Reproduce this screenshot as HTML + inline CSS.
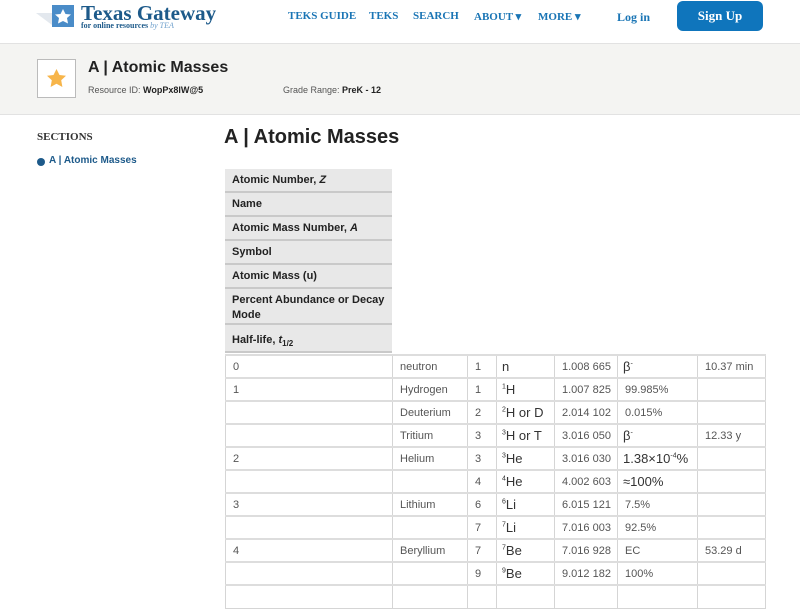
<!DOCTYPE html>
<html><head><meta charset="utf-8"><style>
*{margin:0;padding:0;box-sizing:border-box}
body{width:800px;height:588px;overflow:hidden;background:#fff;font-family:"Liberation Sans",sans-serif;position:relative;color:#222}
.a{position:absolute}
.nav{font-family:"Liberation Serif",serif;font-weight:bold;color:#1a75b5;font-size:11px;top:10px}
.hd{left:225px;width:167px;background:#e8e8e8;border-bottom:2px solid #c9c9c9;font-size:11px;font-weight:bold;padding:5px 7px;color:#222;white-space:nowrap}
table{position:absolute;left:225px;top:354px;border-collapse:collapse;table-layout:fixed;width:540px;font-size:11px;color:#555}
td{height:23px;border:1px solid #d5d5d5;border-top:2px solid #ddd;padding:0 7px;white-space:nowrap}
td.s{font-size:13px;color:#333;padding:0 5px}
sup{font-size:7px}
</style></head><body>
<svg class="a" style="left:36px;top:3px" width="40" height="26"><polygon points="0,10 16,10 16,22" fill="#e3e8ee"/><rect x="16" y="2" width="22" height="22" fill="#4a8cc8"/><polygon points="27,6 29.5,11 35,11.5 31,15 32,20.5 27,18 22,20.5 23,15 19,11.5 24.5,11" fill="#fff"/></svg>
<div class="a" style="left:81px;top:1px;font-family:'Liberation Serif',serif;font-weight:bold;font-size:21px;color:#1d5a8a">Texas Gateway</div>
<div class="a" style="left:81px;top:21px;font-family:'Liberation Serif',serif;font-weight:bold;font-size:8px;color:#1d5a8a">for online resources <i style="color:#6fa0cc;font-weight:normal">by TEA</i></div>
<div class="a nav" style="left:288px">TEKS GUIDE</div>
<div class="a nav" style="left:369px">TEKS</div>
<div class="a nav" style="left:413px">SEARCH</div>
<div class="a nav" style="left:474px">ABOUT ▾</div>
<div class="a nav" style="left:538px">MORE ▾</div>
<div class="a nav" style="left:617px;font-size:12px">Log in</div>
<div class="a" style="left:677px;top:1px;width:86px;height:30px;background:#0f75bc;border-radius:6px;color:#fff;font-family:'Liberation Serif',serif;font-weight:bold;font-size:13px;text-align:center;line-height:30px">Sign Up</div>
<div class="a" style="left:0;top:43px;width:800px;height:72px;background:#f4f4f2;border-top:1px solid #e2e2e2;border-bottom:1px solid #e2e2e2"></div>
<div class="a" style="left:37px;top:59px;width:39px;height:39px;background:#fff;border:1px solid #bbb"></div>
<svg class="a" style="left:46px;top:68px" width="21" height="20"><polygon points="10.5,1 13.5,7 20,7.8 15.2,12.3 16.4,19 10.5,15.7 4.6,19 5.8,12.3 1,7.8 7.5,7" fill="#f7b54a"/></svg>
<div class="a" style="left:88px;top:59px;font-size:16px;font-weight:bold;color:#222">A | Atomic Masses</div>
<div class="a" style="left:88px;top:85px;font-size:9px;color:#555">Resource ID: <b style="color:#222">WopPx8lW@5</b></div>
<div class="a" style="left:283px;top:85px;font-size:9px;color:#555">Grade Range: <b style="color:#222">PreK - 12</b></div>
<div class="a" style="left:37px;top:131px;font-family:'Liberation Serif',serif;font-weight:bold;font-size:11px;color:#333">SECTIONS</div>
<div class="a" style="left:37px;top:158px;width:8px;height:8px;border-radius:50%;background:#1d5a8a"></div>
<div class="a" style="left:49px;top:155px;font-size:10px;font-weight:bold;color:#1d5a8a">A | Atomic Masses</div>
<div class="a" style="left:224px;top:126px;font-size:20px;font-weight:bold;color:#222">A | Atomic Masses</div>
<div class="a hd" style="top:169px;height:24px">Atomic Number, <i>Z</i></div>
<div class="a hd" style="top:193px;height:24px">Name</div>
<div class="a hd" style="top:217px;height:24px">Atomic Mass Number, <i>A</i></div>
<div class="a hd" style="top:241px;height:24px">Symbol</div>
<div class="a hd" style="top:265px;height:24px">Atomic Mass (u)</div>
<div class="a hd" style="top:289px;height:36px;line-height:15px;padding-top:4px">Percent Abundance or Decay<br>Mode</div>
<div class="a hd" style="top:325px;height:28px;padding-top:9px">Half-life, <i>t</i><sub style="font-size:8px">1/2</sub></div>
<table>
<colgroup><col style="width:167px"><col style="width:75px"><col style="width:29px"><col style="width:58px"><col style="width:63px"><col style="width:80px"><col style="width:68px"></colgroup>
<tr><td>0</td><td>neutron</td><td>1</td><td class="s">n</td><td>1.008 665</td><td class="s">β<sup>-</sup></td><td>10.37 min</td></tr>
<tr><td>1</td><td>Hydrogen</td><td>1</td><td class="s"><sup>1</sup>H</td><td>1.007 825</td><td>99.985%</td><td></td></tr>
<tr><td></td><td>Deuterium</td><td>2</td><td class="s"><sup>2</sup>H or D</td><td>2.014 102</td><td>0.015%</td><td></td></tr>
<tr><td></td><td>Tritium</td><td>3</td><td class="s"><sup>3</sup>H or T</td><td>3.016 050</td><td class="s">β<sup>-</sup></td><td>12.33 y</td></tr>
<tr><td>2</td><td>Helium</td><td>3</td><td class="s"><sup>3</sup>He</td><td>3.016 030</td><td class="s">1.38×10<sup>-4</sup>%</td><td></td></tr>
<tr><td></td><td></td><td>4</td><td class="s"><sup>4</sup>He</td><td>4.002 603</td><td class="s">≈100%</td><td></td></tr>
<tr><td>3</td><td>Lithium</td><td>6</td><td class="s"><sup>6</sup>Li</td><td>6.015 121</td><td>7.5%</td><td></td></tr>
<tr><td></td><td></td><td>7</td><td class="s"><sup>7</sup>Li</td><td>7.016 003</td><td>92.5%</td><td></td></tr>
<tr><td>4</td><td>Beryllium</td><td>7</td><td class="s"><sup>7</sup>Be</td><td>7.016 928</td><td>EC</td><td>53.29 d</td></tr>
<tr><td></td><td></td><td>9</td><td class="s"><sup>9</sup>Be</td><td>9.012 182</td><td>100%</td><td></td></tr>
<tr><td></td><td></td><td></td><td></td><td></td><td></td><td></td></tr>
</table>
</body></html>
